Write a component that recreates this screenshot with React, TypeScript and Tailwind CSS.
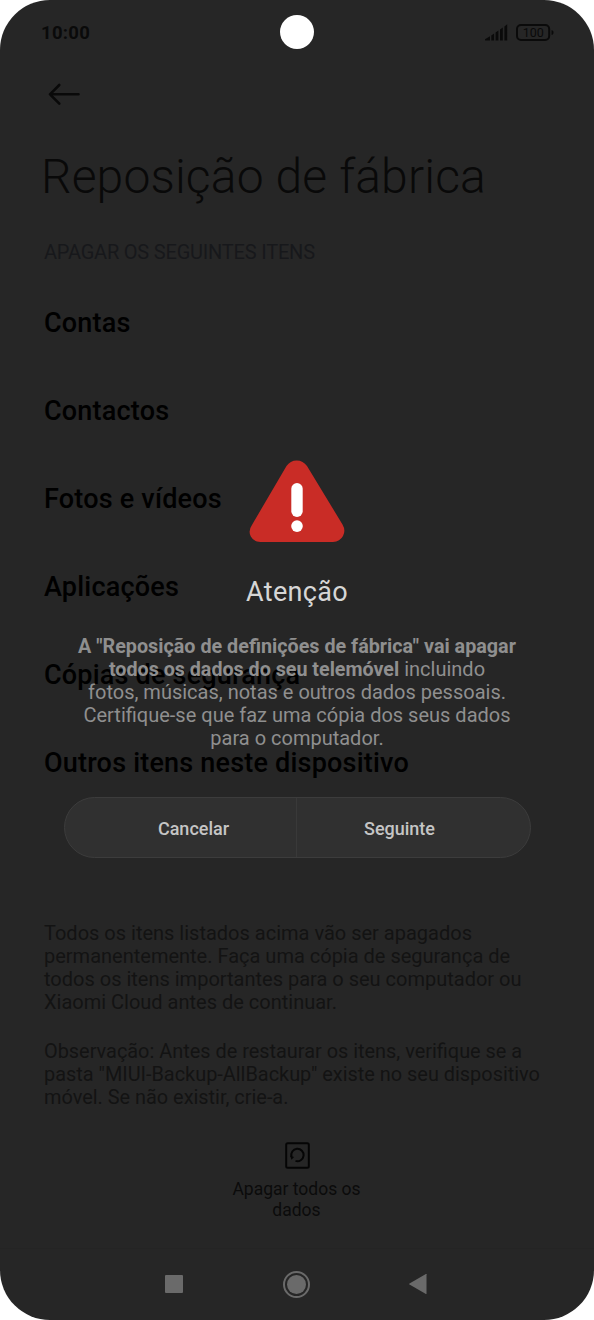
const items = [
  "Contas",
  "Contactos",
  "Fotos e vídeos",
  "Aplicações",
  "Cópias de segurança",
  "Outros itens neste dispositivo",
]

const StatusBar = () => {
  return (
    <div className="relative flex h-[66px] items-center justify-between pl-[41px] pr-10 text-[#0a0a0a]">
      <p className="pt-px text-[18.500px] font-bold leading-none tracking-[0.3px]">10:00</p>
      <div className="absolute left-[280px] top-[15px] size-[34px] rounded-full bg-white" />
      <svg className="h-5 w-[69px]" viewBox="485 23 69 20" fill="currentColor">
        <path d="M485 40.200v-1l5-3v4.200h-4.400zM491.300 35.500l2.800-2v6.900h-2.800zM495.600 32.600l2.800-2v9.800h-2.800zM500 29.500l2.800-2v12.900H500zM504.400 26.500l2.800-2.200v16.100h-2.800z" />
        <rect x="517" y="25" width="32.200" height="15" rx="4" fill="none" stroke="currentColor" strokeWidth="2" />
        <path d="M551.500 30.200c1.400 0 2 .8 2 2.300s-.6 2.300-2 2.300z" />
        <text x="533.200" y="37.200" textAnchor="middle" fontFamily="Roboto" fontSize="12.500" fontWeight="400">100</text>
      </svg>
    </div>
  )
}

const Toolbar = () => {
  return (
    <div className="flex h-14 items-center pl-12">
      <svg className="h-6 w-8" viewBox="0 0 32 24" fill="none" stroke="#090909" strokeWidth="2.600" strokeLinecap="round" strokeLinejoin="round">
        <path d="M30.500 12.300H2M11.300 3 2 12.300l9.300 9.300" />
      </svg>
    </div>
  )
}

const NavigationBar = () => {
  return (
    <div className="flex h-[72px] items-center border-t border-[#242424] pb-px pl-[165px] text-[#6a6a6a]">
      <div className="size-[18px] rounded-[1px] bg-current" />
      <div className="ml-[100px] flex size-[27px] items-center justify-center rounded-full border-2 border-current">
        <div className="size-[19px] rounded-full bg-current" />
      </div>
      <svg className="ml-[99px] h-5 w-[18px]" viewBox="0 0 18 20" fill="currentColor">
        <path d="M17.500.3v19.400q0 .5-.6.200L.5 10.600q-.7-.5 0-1L16.900.1q.6-.3.6.2z" />
      </svg>
    </div>
  )
}

const WarningDialog = () => {
  return (
    <div className="absolute inset-0 flex flex-col items-center pt-[460px]">
      <svg className="h-[82px] w-24" viewBox="0 0 96 82">
        <path d="M37.500 6Q41.200.4 47.700.4T58 6l35.500 58.500Q97 70.500 94 76t-10 6H11.500Q4.500 82 1.700 76.300t1.400-11.600z" fill="#c92c26" />
        <rect x="42.300" y="23" width="11.400" height="34" rx="5.700" fill="#fff" />
        <circle cx="48" cy="66.100" r="5.800" fill="#fff" />
      </svg>
      <h2 className="mt-[34px] whitespace-nowrap text-[27px] leading-8 tracking-[0.3px] text-[#d6d6d6]">Atenção</h2>
      <p className="mt-[27px] whitespace-nowrap text-center text-[20px] leading-[23px] text-[#8f8f8f]">
        <b className="text-[19.750px] font-bold">A "Reposição de definições de fábrica" vai apagar</b>
        <br />
        <b className="text-[19.700px] font-bold">todos os dados do seu telemóvel</b> incluindo
        <br />
        fotos, músicas, notas e outros dados pessoais.
        <br />
        Certifique-se que faz uma cópia dos seus dados
        <br />
        para o computador.
      </p>
      <div className="mt-[47px] flex h-[61px] w-[467px] overflow-hidden rounded-full border border-[#3c3c3c] bg-[#303030] text-[18px] font-medium text-[#c5c5c5]">
        <button className="w-[232px] border-r border-[#393939] pl-[27px] pt-px">Cancelar</button>
        <button className="flex-1 pr-[27px] pt-px">Seguinte</button>
      </div>
    </div>
  )
}

const App = () => {
  return (
    <div className="bg-white">
      <div className="relative flex h-[1320px] w-[594px] flex-col overflow-hidden rounded-[50px] bg-[#262626] font-[Roboto,sans-serif]">
        <StatusBar />
        <Toolbar />
        <h1 className="mt-[25px] whitespace-nowrap pl-[41px] text-[48px] font-light leading-[60px] tracking-[0.15px] text-[#090909]">Reposição de fábrica</h1>
        <p className="mt-[33px] whitespace-nowrap pl-11 text-[20px] leading-6 tracking-[-0.2px] text-[#17181b]">APAGAR OS SEGUINTES ITENS</p>
        <ul className="mt-[15px] pl-11 text-[27px] font-medium tracking-[0.2px] text-black">
          {items.map((item) => (
            <li key={item} className="flex h-[88px] items-center whitespace-nowrap">{item}</li>
          ))}
        </ul>
        <div className="mt-[115px] flex flex-col gap-[26px] whitespace-nowrap pl-11 text-[20px] leading-[23px] text-[#131313]">
          <p>
            Todos os itens listados acima vão ser apagados
            <br />
            permanentemente. Faça uma cópia de segurança de
            <br />
            todos os itens importantes para o seu computador ou
            <br />
            Xiaomi Cloud antes de continuar.
          </p>
          <p className="text-[19.900px]">
            Observação: Antes de restaurar os itens, verifique se a
            <br />
            pasta "MIUI-Backup-AllBackup" existe no seu dispositivo
            <br />
            móvel. Se não existir, crie-a.
          </p>
        </div>
        <div className="mt-[33px] flex flex-col items-center text-[#050505]">
          <svg className="h-[27px] w-[25px]" viewBox="0 0 25 27" fill="none" stroke="currentColor" strokeWidth="2">
            <rect x="1.200" y="1.200" width="22.600" height="24.600" rx="1.500" />
            <path d="M6.500 14.800A6.200 6.200 0 1 1 10.500 18.900" />
            <path d="M5.100 13.600l4 1.400-2.600 2.800z" fill="currentColor" stroke="none" />
          </svg>
          <p className="mt-[10px] whitespace-nowrap pr-px text-center text-[17.500px] leading-[21px] text-[#0b0b0b]">
            Apagar todos os
            <br />
            dados
          </p>
        </div>
        <div className="mt-auto">
          <NavigationBar />
        </div>
        <WarningDialog />
      </div>
    </div>
  )
}

export default App
